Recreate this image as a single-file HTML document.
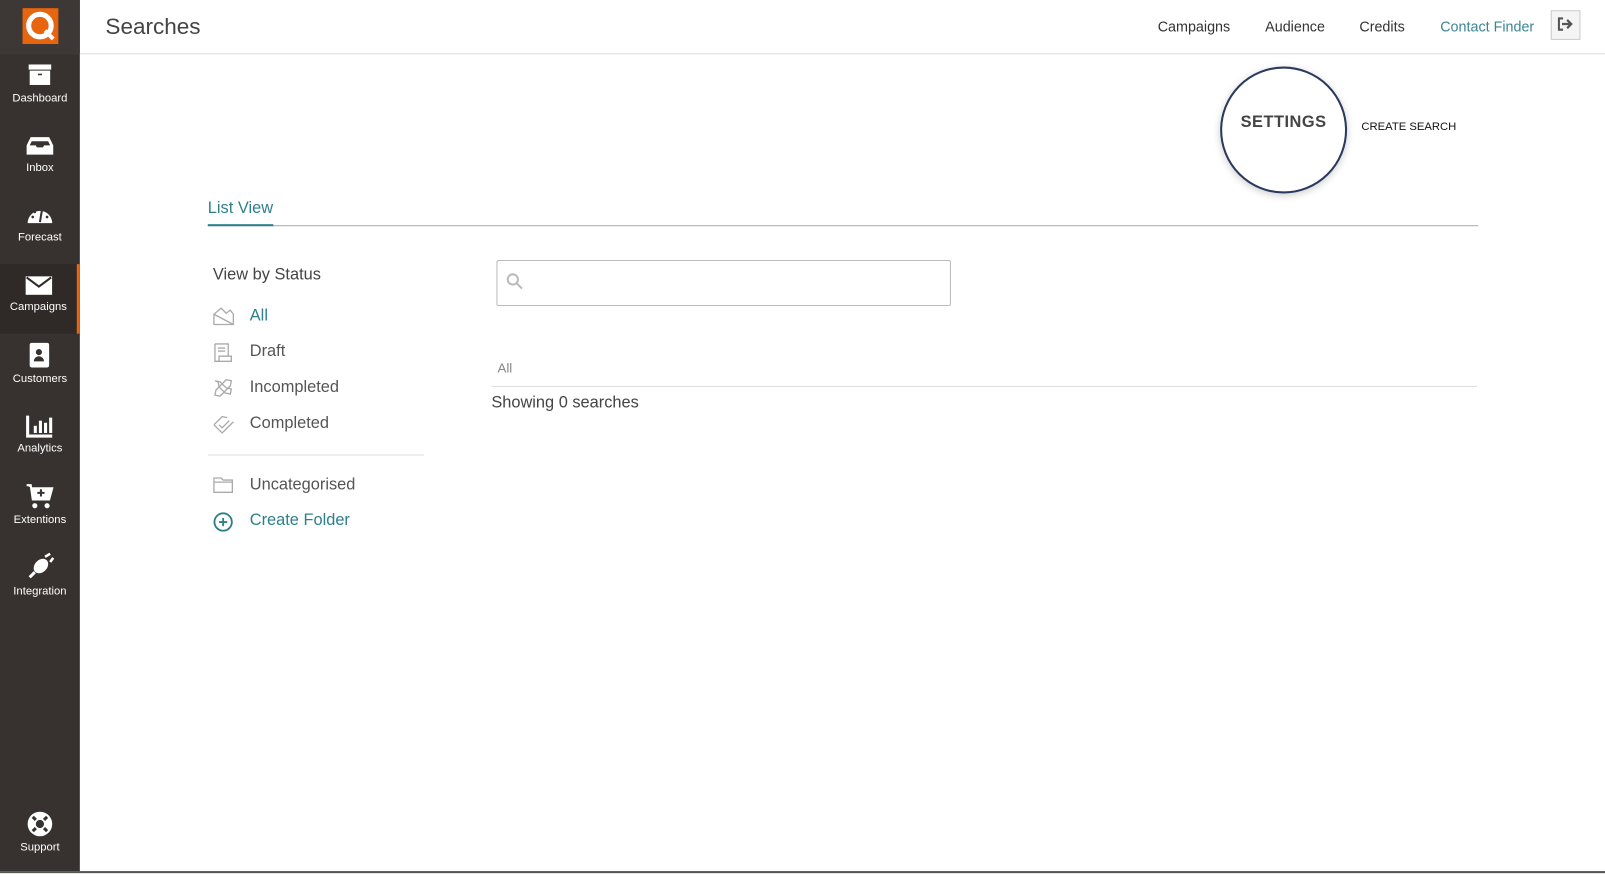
<!DOCTYPE html>
<html><head><meta charset="utf-8"><style>
*{margin:0;padding:0;box-sizing:border-box}
html,body{width:1605px;height:872px;overflow:hidden;background:#fff}
#w{position:absolute;left:0;top:0;width:1568px;height:852px;transform:scale(1.0236);transform-origin:0 0;font-family:"Liberation Sans",sans-serif}
.sb{position:absolute;left:0;top:0;width:78px;height:851px;background:#37322f}
.logo{position:absolute;left:0;top:0;width:78px;height:53px;background:#3d3835}
.item{position:absolute;left:0;width:78px;height:68px;text-align:center;color:#fff;font-size:11px}
.item svg{display:block;margin:0 auto}
.item span{display:block;margin-top:4px}
.act{background:#2f2a27;border-right:3px solid #e8650f}
.hdr{position:absolute;left:78px;top:0;right:0;height:53px;border-bottom:1px solid #ddd}
.title{position:absolute;left:103px;top:13px;font-size:22px;color:#444;font-weight:300}
.nav{position:absolute;top:18px;font-size:14px;color:#333}
.t{position:absolute;color:#555;font-size:16px}
.ico{position:absolute;left:208px}
</style></head><body><div id="w">
<div class="sb">
 <div class="logo"><svg width="78" height="53"><rect x="22" y="8" width="35" height="35" fill="#e8650f"/><circle cx="39" cy="25" r="11" fill="none" stroke="#fff" stroke-width="5"/><path d="M44 30 L52 38" stroke="#fff" stroke-width="4"/></svg></div>
 <div class="item" style="top:60px"><svg width="26" height="26" viewBox="0 0 26 26"><rect x="2" y="3" width="22" height="5" fill="#fff"/><rect x="3" y="9" width="20" height="14" fill="#fff"/><rect x="11" y="12" width="4" height="1.5" fill="#37322f"/></svg><span>Dashboard</span></div>
 <div class="item" style="top:130px"><svg width="28" height="24" viewBox="0 0 28 24"><path d="M5 4h18l4 8v9H1v-9z" fill="#fff"/><path d="M6 8h16l2 4h-6l-1 2h-6l-1-2H4z" fill="#37322f"/></svg><span>Inbox</span></div>
 <div class="item" style="top:198px"><svg width="28" height="24" viewBox="0 0 28 24"><path d="M2 20a12 12 0 1 1 24 0z" fill="#fff"/><path d="M14 19l2-12" stroke="#37322f" stroke-width="2"/><circle cx="7" cy="14" r="1.3" fill="#37322f"/><circle cx="21" cy="14" r="1.3" fill="#37322f"/><circle cx="9" cy="9" r="1.3" fill="#37322f"/></svg><span>Forecast</span></div>
 <div class="item act" style="top:258px;padding-top:10px"><svg width="26" height="22" viewBox="0 0 26 22"><rect x="0" y="2" width="26" height="18" fill="#fff"/><path d="M1 3l12 9 12-9" stroke="#2f2a27" stroke-width="2" fill="none"/></svg><span>Campaigns</span></div>
 <div class="item" style="top:334px"><svg width="26" height="26" viewBox="0 0 26 26"><rect x="3" y="1" width="19" height="24" rx="2" fill="#fff"/><circle cx="12" cy="10" r="3" fill="#37322f"/><path d="M7 19a5 5 0 0 1 10 0z" fill="#37322f"/></svg><span>Customers</span></div>
 <div class="item" style="top:404px"><svg width="28" height="24" viewBox="0 0 28 24"><path d="M2 2v20h24" stroke="#fff" stroke-width="3" fill="none"/><rect x="8" y="12" width="3" height="7" fill="#fff"/><rect x="13" y="7" width="3" height="12" fill="#fff"/><rect x="18" y="9" width="3" height="10" fill="#fff"/><rect x="23" y="4" width="3" height="15" fill="#fff"/></svg><span>Analytics</span></div>
 <div class="item" style="top:472px"><svg width="28" height="26" viewBox="0 0 28 26"><path d="M1 2h4l2 14h16l3-11H6" fill="#fff" stroke="#fff" stroke-width="2"/><path d="M15 6v7M11.5 9.5h7" stroke="#37322f" stroke-width="2"/><circle cx="9" cy="22" r="2.5" fill="#fff"/><circle cx="21" cy="22" r="2.5" fill="#fff"/></svg><span>Extentions</span></div>
 <div class="item" style="top:540px"><svg width="28" height="28" viewBox="0 0 28 28"><path d="M4 24l5-5" stroke="#fff" stroke-width="3"/><ellipse cx="15" cy="13" rx="6" ry="8" transform="rotate(45 15 13)" fill="#fff"/><path d="M19 4l5-3M24 9l3-4" stroke="#fff" stroke-width="2.5"/></svg><span>Integration</span></div>
 <div class="item" style="top:792px"><svg width="26" height="26" viewBox="0 0 26 26"><circle cx="13" cy="13" r="12" fill="#fff"/><circle cx="13" cy="13" r="4" fill="#37322f"/><path d="M6 6l3 3M20 6l-3 3M6 20l3-3M20 20l-3-3" stroke="#37322f" stroke-width="3"/></svg><span>Support</span></div>
</div>
<div style="position:absolute;left:0;top:851px;width:1568px;height:2px;background:#555"></div>
<div class="hdr"></div>
<div class="title">Searches</div>
<div class="nav" style="left:1131px">Campaigns</div>
<div class="nav" style="left:1236px">Audience</div>
<div class="nav" style="left:1328px">Credits</div>
<div class="nav" style="left:1407px;color:#3a8595">Contact Finder</div>
<div style="position:absolute;left:1515px;top:10px;width:29px;height:29px;border:1px solid #ccc;background:#f4f4f4"><svg width="27" height="27" viewBox="0 0 27 27"><path d="M11 7H7v11h4" stroke="#555" stroke-width="2" fill="none"/><path d="M10 12.5h8M15 8.5l4 4-4 4" stroke="#555" stroke-width="2.2" fill="none"/></svg></div>
<div style="position:absolute;left:1192px;top:65px;width:124px;height:124px;border-radius:50%;border:2px solid #2a3a5e;box-shadow:0 2px 8px rgba(0,0,0,.2);background:#fff"></div>
<div style="position:absolute;left:1192px;top:111px;width:124px;text-align:center;font-size:16px;font-weight:bold;color:#444;letter-spacing:.5px">SETTINGS</div>
<div style="position:absolute;left:1330px;top:118px;font-size:11px;color:#111">CREATE SEARCH</div>
<div style="position:absolute;left:203px;top:195px;font-size:16px;color:#2e7f8c">List View</div>
<div style="position:absolute;left:203px;top:220px;width:1241px;height:1px;background:#aaa"></div>
<div style="position:absolute;left:203px;top:219px;width:64px;height:2px;background:#2e7f8c"></div>
<div class="t" style="left:208px;top:260px;color:#444">View by Status</div>
<svg class="ico" style="top:300px" width="22" height="18" viewBox="0 0 22 18" fill="none" stroke="#aaa" stroke-width="1.3"><path d="M1 7v10h19V7l-3-4-4 3-5-5-7 6zM1 7l19 10"/></svg>
<div class="t" style="left:244px;top:300px;color:#2e7f8c">All</div>
<svg class="ico" style="top:335px" width="20" height="20" viewBox="0 0 20 20" fill="none" stroke="#aaa" stroke-width="1.3"><path d="M2 1h13v12M2 1v17h16v-5H6v5M5 5h7M5 8h7"/></svg>
<div class="t" style="left:244px;top:335px">Draft</div>
<svg class="ico" style="top:370px" width="20" height="20" viewBox="0 0 20 20" fill="none" stroke="#aaa" stroke-width="1.3"><path d="M2 2l5 1 6 6 5 1-1 5-5-1-6-6-1-5zM18 2l-1 5-10 10-5-1 1-5 10-10z"/></svg>
<div class="t" style="left:244px;top:370px">Incompleted</div>
<svg class="ico" style="top:405px" width="22" height="20" viewBox="0 0 22 20" fill="none" stroke="#aaa" stroke-width="1.3"><path d="M1 10l8-8 5 1M1 10l8 8 11-11M6 10l3 3 7-7"/></svg>
<div class="t" style="left:244px;top:405px">Completed</div>
<div style="position:absolute;left:203px;top:444px;width:211px;height:1px;background:#ddd"></div>
<svg class="ico" style="top:466px" width="20" height="16" viewBox="0 0 20 16" fill="none" stroke="#aaa" stroke-width="1.3"><path d="M1 1h7l2 2h9v12H1zM1 5h18"/></svg>
<div class="t" style="left:244px;top:465px">Uncategorised</div>
<svg class="ico" style="top:500px" width="20" height="20" viewBox="0 0 20 20" fill="none" stroke="#2e7f8c" stroke-width="1.8"><circle cx="10" cy="10" r="8.5"/><path d="M10 6v8M6 10h8"/></svg>
<div class="t" style="left:244px;top:500px;color:#2e7f8c">Create Folder</div>
<div style="position:absolute;left:485px;top:254px;width:444px;height:45px;border:1px solid #bbb;border-radius:2px"><svg style="position:absolute;left:8px;top:11px" width="18" height="18" viewBox="0 0 18 18" fill="none" stroke="#bbb" stroke-width="2"><circle cx="7" cy="7" r="5"/><path d="M11 11l5 5"/></svg></div>
<div style="position:absolute;left:486px;top:352px;font-size:13px;color:#888">All</div>
<div style="position:absolute;left:480px;top:377px;width:963px;height:1px;background:#ddd"></div>
<div class="t" style="left:480px;top:385px;color:#444">Showing 0 searches</div>
</div></body></html>
